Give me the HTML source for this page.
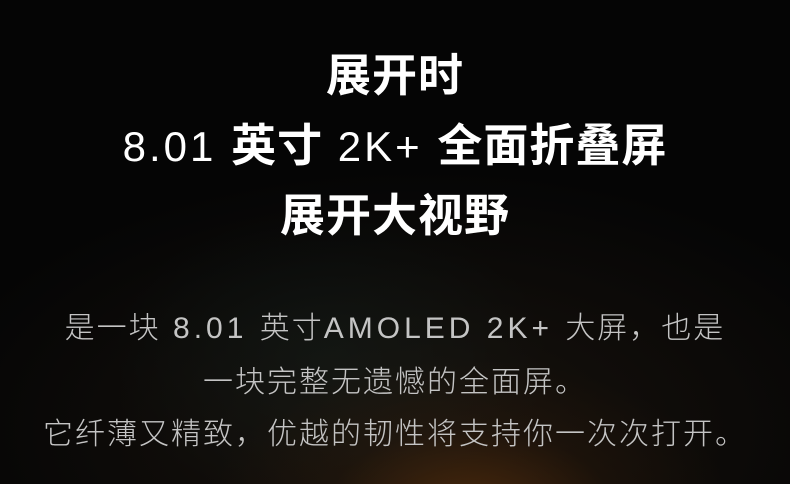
<!DOCTYPE html>
<html><head><meta charset="utf-8"><style>
html,body{margin:0;padding:0}
body{width:790px;height:484px;overflow:hidden;position:relative;
background:
radial-gradient(ellipse 260px 150px at 470px 510px, rgba(110,58,14,0.6), rgba(55,30,10,0.25) 55%, rgba(0,0,0,0) 100%),
radial-gradient(ellipse 500px 260px at 420px 430px, rgba(40,30,20,0.55), rgba(0,0,0,0) 100%),
radial-gradient(ellipse 220px 150px at 330px 360px, rgba(10,30,30,0.5), rgba(0,0,0,0) 100%),
#050505;
font-family:"Liberation Sans","Noto Sans CJK SC",sans-serif;}
.t{position:absolute;left:0;width:790px;text-align:center;color:#fff;font-weight:bold;font-size:45px;letter-spacing:1px;line-height:50px;white-space:nowrap;font-family:"Noto Sans CJK SC",sans-serif}
.t span{font-family:"Liberation Sans",sans-serif;font-weight:normal;font-size:42px;letter-spacing:3px}
.b{position:absolute;left:0;width:790px;text-align:center;color:#c4c4c4;font-size:30px;letter-spacing:2px;line-height:36px;white-space:nowrap;font-family:"Noto Sans CJK SC",sans-serif;font-weight:300}
.b span{font-family:"Liberation Sans",sans-serif;font-size:30px;letter-spacing:4px}
</style></head><body>
<div class="t" style="top:47px">展开时</div>
<div class="t" style="top:117px"><span>8.01 </span>英寸<span> 2K+ </span>全面折叠屏</div>
<div class="t" style="top:187px">展开大视野</div>
<div class="b" style="top:307px">是一块<span> 8.01 </span>英寸<span>AMOLED 2K+ </span>大屏，也是</div>
<div class="b" style="top:361px">一块完整无遗憾的全面屏。</div>
<div class="b" style="top:413px">它纤薄又精致，优越的韧性将支持你一次次打开。</div>
</body></html>
